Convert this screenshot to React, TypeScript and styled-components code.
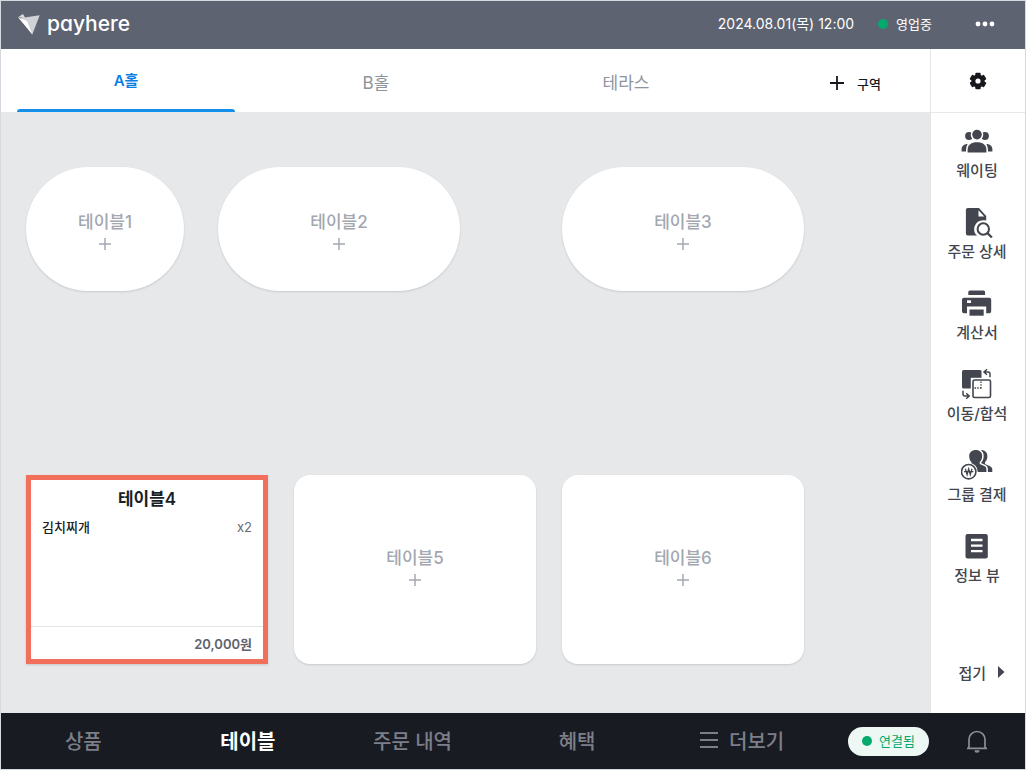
import React from "react";
import styled, { createGlobalStyle, css } from "styled-components";

const GlobalStyle = createGlobalStyle`
  * { box-sizing: border-box; }
  body {
    margin: 0;
    background: #e6e8ea;
    font-family: Inter, "Noto Sans CJK KR", sans-serif;
  }
  button {
    margin: 0;
    padding: 0;
    border: 0;
    background: none;
    font: inherit;
    color: inherit;
    cursor: pointer;
  }
  a { color: inherit; text-decoration: none; }
  svg { display: block; flex: none; }
`;

const Page = styled.div`
  display: flex;
  flex-direction: column;
  min-height: 100vh;
  border: 1px solid #d5dae1;
`;

const Header = styled.header`
  display: flex;
  align-items: center;
  height: 48px;
  padding: 0 30px 2px 16px;
  background: #5d6370;
  color: #fff;
`;

const Brand = styled.a`
  display: flex;
  align-items: center;
  gap: 6px;
  margin-right: auto;
  font-size: 21px;
  font-weight: 500;
  line-height: 28px;
  font-feature-settings: "cv11";
`;

const Clock = styled.time`
  font-size: 14px;
  font-weight: 400;
  line-height: 20px;
`;

const Status = styled.span`
  display: flex;
  align-items: center;
  gap: 8px;
  margin: 0 43px 0 24px;
  font-size: 13px;
  line-height: 20px;
`;

const Dot = styled.span`
  width: 10px;
  height: 10px;
  border-radius: 5px;
  background: #04a96d;
`;

const Body = styled.div`
  display: flex;
  flex: 1;
`;

const Main = styled.main`
  display: flex;
  flex: 1;
  flex-direction: column;
  min-width: 0;
`;

const Tabs = styled.div`
  display: grid;
  grid-template-columns: 250fr 250fr 250fr 179fr;
  height: 63px;
  background: #fff;
`;

const Tab = styled.button<{ $active?: boolean }>`
  display: flex;
  flex-direction: column;
  align-items: stretch;
  padding: 4px 16px 0;
  color: #8f939c;
  font-size: 17px;
  line-height: 60px;

  ${(p) =>
    p.$active &&
    css`
      padding-top: 0;
      color: #0a80e6;
      font-weight: 600;
      font-size: 15px;
      line-height: 64px;
      &::after {
        content: "";
        height: 3px;
        margin-top: -4px;
        border-radius: 3px 3px 0 0;
        background: #1590ea;
      }
    `}
`;

const AddZone = styled.button`
  display: flex;
  align-items: center;
  justify-content: flex-end;
  gap: 13px;
  padding: 4px 49px 0 0;
  color: #17181c;
  font-size: 13px;
  font-weight: 500;
`;

const Floor = styled.div`
  position: relative;
  flex: 1;
  min-height: 600px;
`;

const Table = styled.button<{ $x: number; $y: number; $w: number; $h: number; $round?: boolean }>`
  position: absolute;
  left: ${(p) => p.$x}px;
  top: ${(p) => p.$y}px;
  width: ${(p) => p.$w}px;
  height: ${(p) => p.$h}px;
  display: flex;
  flex-direction: column;
  align-items: center;
  justify-content: center;
  gap: 3px;
  padding-bottom: ${(p) => (p.$round ? 0 : 8)}px;
  border-radius: ${(p) => (p.$round ? 62 : 16)}px;
  background: #fff;
  box-shadow: 0 1px 2px rgba(40, 50, 60, 0.16);
  color: #a3a7b0;
  font-size: 17px;
  font-weight: 500;
  line-height: 26px;
`;

const OrderedTable = styled(Table)`
  align-items: stretch;
  justify-content: flex-start;
  gap: 0;
  padding: 0;
  border: 5px solid #f26f5b;
  border-radius: 0;
  color: #1b1d24;
`;

const TableName = styled.strong`
  padding-top: 5px;
  font-weight: 600;
  line-height: 28px;
`;

const OrderLine = styled.span`
  display: flex;
  justify-content: space-between;
  padding: 3px 11px;
  font-size: 13px;
  line-height: 22px;
`;

const Quantity = styled.span`
  color: #676c76;
  font-weight: 400;
`;

const Total = styled.span`
  margin-top: auto;
  padding: 2px 11px 0;
  border-top: 1px solid #e2e4e7;
  color: #5d626d;
  font-size: 13px;
  font-weight: 600;
  line-height: 30px;
  text-align: right;
`;

const Side = styled.aside`
  display: flex;
  flex-direction: column;
  width: 95px;
  border-left: 1px solid #e3e5e8;
  background: #fff;
  color: #43464e;
`;

const SettingsButton = styled.button`
  display: flex;
  align-items: center;
  justify-content: center;
  height: 64px;
  border-bottom: 1px solid #e6e8ea;
`;

const Tool = styled.button`
  display: flex;
  flex-direction: column;
  align-items: center;
  height: 81px;
  padding: 12px 2px 0 0;
  font-size: 15px;
  font-weight: 500;
  line-height: 28px;
  white-space: nowrap;
`;

const Fold = styled.button`
  display: flex;
  align-items: center;
  justify-content: flex-end;
  gap: 12px;
  height: 80px;
  margin-top: auto;
  padding: 0 20px 2px 0;
  font-size: 15px;
  font-weight: 500;
`;

const Footer = styled.footer`
  display: flex;
  height: 56px;
  background: #191b23;
  color: #7c7f89;
`;

const Nav = styled.nav`
  display: flex;
  flex: 1;
`;

const NavLink = styled.a<{ $active?: boolean }>`
  flex: 1 1 0;
  display: flex;
  align-items: center;
  justify-content: center;
  gap: 10px;
  padding-bottom: 2px;
  font-size: 20px;
  font-weight: ${(p) => (p.$active ? 700 : 500)};
  color: ${(p) => (p.$active ? "#fff" : "inherit")};
`;

const Connection = styled.span`
  display: flex;
  align-items: center;
  align-self: center;
  justify-content: center;
  gap: 7px;
  width: 81px;
  height: 29px;
  margin-left: 24px;
  padding-bottom: 1px;
  border-radius: 15px;
  background: #edf7f3;
  color: #04a96d;
  font-size: 13px;
`;

const BellButton = styled.button`
  display: flex;
  align-items: center;
  justify-content: center;
  width: 96px;
`;

const Icon = ({ children }: { children: React.ReactNode }) => (
  <svg width="32" height="32" viewBox="0 0 32 32" fill="#43464e" aria-hidden="true">
    {children}
  </svg>
);

const Plus = ({ size, width }: { size: number; width: number }) => (
  <svg width={size} height={size} viewBox="0 0 14 14" stroke="currentColor" strokeWidth={width} aria-hidden="true">
    <path d="M7 0v14M0 7h14" />
  </svg>
);

const WaitingIcon = () => (
  <Icon>
    <circle cx="8" cy="11" r="3.900" />
    <circle cx="24" cy="11" r="3.900" />
    <path d="M.6 26.600v-2.300c0-3.200 2.500-5.300 6-5.300L5 26.600zM31.400 26.600v-2.300c0-3.200-2.500-5.300-6-5.300l1.600 7.600z" />
    <g stroke="#fff" strokeWidth="3" paintOrder="stroke">
      <circle cx="16" cy="9.600" r="4.800" />
      <path d="M6.600 27.400v-2.600c0-5 3.700-7.600 9.400-7.600s9.400 2.600 9.400 7.600v2.600z" />
    </g>
  </Icon>
);

const OrderDetailIcon = () => (
  <Icon>
    <path d="M6.800 2H18l7.200 8v19.500H6.800a1.900 1.900 0 0 1-1.900-1.900V3.900A1.900 1.900 0 0 1 6.800 2z" />
    <path d="M17.500 4.300v6.200h5.700z" fill="#fff" />
    <path d="M22.300 14.200a9 9 0 0 0-5.500 16.200h9.500v-16z" fill="#fff" />
    <circle cx="22.300" cy="23" r="5.700" fill="#fff" stroke="#43464e" strokeWidth="2" />
    <path d="M26.400 27.100l4.500 4.400" stroke="#43464e" strokeWidth="2.200" />
  </Icon>
);

const PrinterIcon = () => (
  <Icon>
    <path d="M9 3.400h13.400a1.700 1.700 0 0 1 1.700 1.700v3H7.300v-3A1.700 1.700 0 0 1 9 3.400z" />
    <path d="M3 10.700h25.200a2 2 0 0 1 2 2v11.600a2 2 0 0 1-2 2h-3v-6.900H6v6.900H3a2 2 0 0 1-2-2V12.700a2 2 0 0 1 2-2z" />
    <path d="M6 13.300h4V16H6z" fill="#fff" />
    <path d="M8.500 22.500h14.200v6.200H8.500z" />
  </Icon>
);

const MoveIcon = () => (
  <Icon>
    <rect x="1" y="2" width="19.500" height="18.500" rx="1.500" />
    <rect x="9.800" y="9.800" width="21.500" height="21.500" fill="#fff" />
    <g fill="none" stroke="#43464e">
      <rect x="12" y="12" width="17.500" height="17.500" rx="1.500" strokeWidth="1.600" />
      <path d="M13.500 20h7M20 13.500v7" strokeWidth="1.300" strokeDasharray="1.500 1.200" />
      <path d="M26 1.300L23 4l3 2.700M23 4h4a2 2 0 0 1 2 2v3.300" strokeWidth="1.500" />
      <path d="M2 22.700V26a2 2 0 0 0 2 2h4M5.200 25.300L8.200 28l-3 2.700" strokeWidth="1.500" />
    </g>
  </Icon>
);

const GroupPayIcon = () => (
  <Icon>
    <path d="M19.500 1c4.200-.2 6.900 2.400 6.900 6 0 2.700-.8 4.700-2.400 6v2l5 2.200c1.700.8 2.300 1.800 2.300 3.400V23H20z" />
    <path
      d="M14.800.9c3.900 0 6.400 2.400 6.400 5.900 0 2.700-.9 5-2.500 6.300V15l4.500 2.100c1.500.7 2.200 1.700 2.200 3.200V23H8l2.500-8.600v-1.300C8.900 11.800 8.200 9.500 8.200 6.800c0-3.500 2.700-5.900 6.600-5.900z"
      stroke="#fff"
      strokeWidth="3"
      paintOrder="stroke"
    />
    <circle cx="7.700" cy="22.700" r="9" fill="#fff" />
    <circle cx="7.700" cy="22.700" r="7.200" fill="#fff" stroke="#43464e" strokeWidth="1.600" />
    <path d="M4.400 19.700l1.700 6 1.600-5.700 1.600 5.700 1.700-6M3 22.700h9.400" fill="none" stroke="#43464e" strokeWidth="1.300" />
  </Icon>
);

const InfoIcon = () => (
  <Icon>
    <rect x="4.500" y="4" width="22.300" height="24.400" rx="2" />
    <path d="M10 10h11.500M10 15.600h11.500M10 21.200h11.500" stroke="#fff" strokeWidth="2.300" />
  </Icon>
);

const GearIcon = () => (
  <svg width="18" height="18" viewBox="-9 -9 18 18" aria-hidden="true">
    <g fill="#17181c" stroke="#17181c" strokeWidth="2" strokeLinejoin="round">
      <circle r="5.600" />
      {[0, 60, 120].map((angle) => (
        <rect key={angle} x="-1.700" y="-7.300" width="3.400" height="14.600" transform={`rotate(${angle})`} />
      ))}
    </g>
    <circle r="2.600" fill="#fff" />
  </svg>
);

const LogoIcon = () => (
  <svg width="24" height="24" viewBox="0 0 24 24" aria-hidden="true">
    <path d="M4 6L22.700 3.200 15.300 22.600z" fill="#cfd2d6" />
    <path d="M1 5.200L6 2l2.200 4z" fill="#d9dbdf" />
    <path d="M1 5.200L10 9l5.300 13.600z" fill="#fff" />
  </svg>
);

const emptyTables = [
  { name: "테이블1", x: 25, y: 55, w: 158, h: 124, round: true },
  { name: "테이블2", x: 217, y: 55, w: 242, h: 124, round: true },
  { name: "테이블3", x: 561, y: 55, w: 242, h: 124, round: true },
  { name: "테이블5", x: 293, y: 363, w: 242, h: 189 },
  { name: "테이블6", x: 561, y: 363, w: 242, h: 189 },
];

const tools = [
  { label: "웨이팅", Glyph: WaitingIcon },
  { label: "주문 상세", Glyph: OrderDetailIcon },
  { label: "계산서", Glyph: PrinterIcon },
  { label: "이동/합석", Glyph: MoveIcon },
  { label: "그룹 결제", Glyph: GroupPayIcon },
  { label: "정보 뷰", Glyph: InfoIcon },
];

export default function App() {
  return (
    <>
      <GlobalStyle />
      <Page>
        <Header>
          <Brand href="#">
            <LogoIcon />
            payhere
          </Brand>
          <Clock dateTime="2024-08-01T12:00">2024.08.01(목) 12:00</Clock>
          <Status>
            <Dot />
            영업중
          </Status>
          <button type="button" aria-label="메뉴">
            <svg width="20" height="6" viewBox="0 0 20 6" fill="#fff" aria-hidden="true">
              <circle cx="3" cy="3" r="2.400" />
              <circle cx="10" cy="3" r="2.400" />
              <circle cx="17" cy="3" r="2.400" />
            </svg>
          </button>
        </Header>

        <Body>
          <Main>
            <Tabs>
              <Tab type="button" $active>A홀</Tab>
              <Tab type="button">B홀</Tab>
              <Tab type="button">테라스</Tab>
              <AddZone type="button">
                <Plus size={14} width={1.8} />
                구역
              </AddZone>
            </Tabs>
            <Floor>
              {emptyTables.map((t) => (
                <Table key={t.name} type="button" $x={t.x} $y={t.y} $w={t.w} $h={t.h} $round={t.round}>
                  {t.name}
                  <Plus size={12} width={1.7} />
                </Table>
              ))}
              <OrderedTable type="button" $x={25} $y={363} $w={242} $h={189}>
                <TableName>테이블4</TableName>
                <OrderLine>
                  김치찌개
                  <Quantity>x2</Quantity>
                </OrderLine>
                <Total>20,000원</Total>
              </OrderedTable>
            </Floor>
          </Main>

          <Side>
            <SettingsButton type="button" aria-label="설정">
              <GearIcon />
            </SettingsButton>
            {tools.map(({ label, Glyph }) => (
              <Tool key={label} type="button">
                <Glyph />
                {label}
              </Tool>
            ))}
            <Fold type="button">
              접기
              <svg width="7" height="12" viewBox="0 0 7 12" fill="#43464e" aria-hidden="true">
                <path d="M0 0l6.500 6L0 12z" />
              </svg>
            </Fold>
          </Side>
        </Body>

        <Footer>
          <Nav>
            <NavLink href="#">상품</NavLink>
            <NavLink href="#" $active>테이블</NavLink>
            <NavLink href="#">주문 내역</NavLink>
            <NavLink href="#">혜택</NavLink>
            <NavLink href="#">
              <svg width="20" height="18" viewBox="0 0 20 18" stroke="currentColor" strokeWidth="1.800" aria-hidden="true">
                <path d="M1 2h18M1 9h18M1 16h18" />
              </svg>
              더보기
            </NavLink>
          </Nav>
          <Connection>
            <Dot />
            연결됨
          </Connection>
          <BellButton type="button" aria-label="알림">
            <svg width="22" height="24" viewBox="0 0 22 24" fill="none" stroke="#8b8e97" strokeWidth="1.700" aria-hidden="true">
              <path d="M3 19v-8.500a8 8 0 0 1 16 0V19M1 19.300h20" />
              <path d="M8.500 21.300h5a2.500 2.500 0 0 1-5 0z" fill="#8b8e97" stroke="none" />
            </svg>
          </BellButton>
        </Footer>
      </Page>
    </>
  );
}
